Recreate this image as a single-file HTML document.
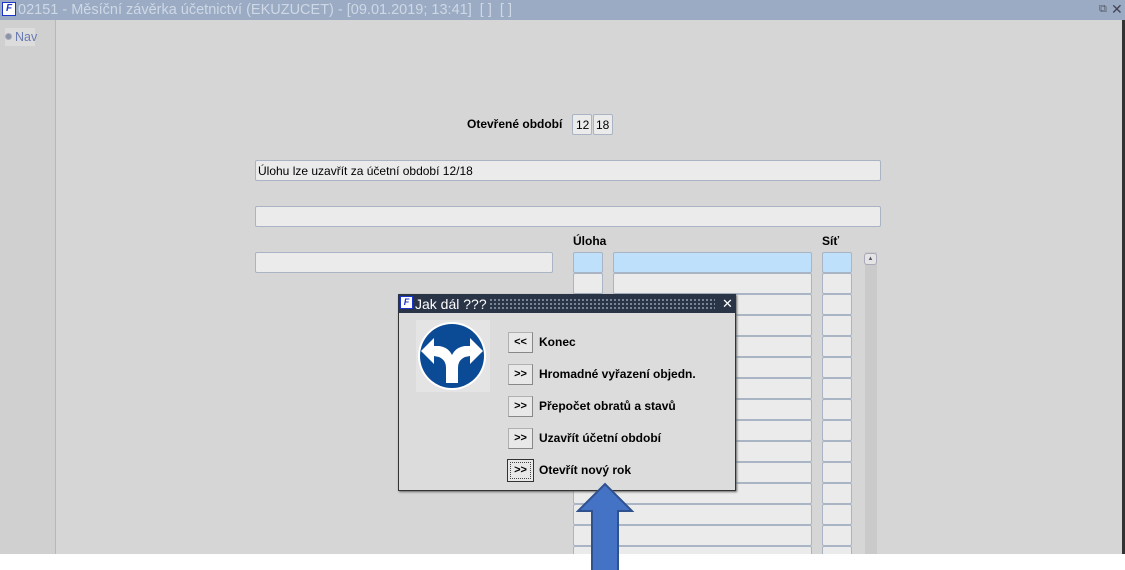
<!DOCTYPE html>
<html><head><meta charset="utf-8"><style>
*{margin:0;padding:0;box-sizing:border-box}
body{width:1125px;height:570px;background:#fff;position:relative;overflow:hidden;font-family:"Liberation Sans",Arial,sans-serif;font-size:12px;color:#000}
.a{position:absolute}
.f{position:absolute;background:#ebebeb;border:1px solid #a9b4c4;border-radius:2px}
.b{background:#bfe0fb}
.lbl{position:absolute;font-weight:bold;font-size:12px}
.btn{position:absolute;left:508px;width:25px;height:21px;background:#e8e8e8;border:1px solid #b0b0b0;border-bottom-color:#888;border-right-color:#888;font-weight:bold;font-size:11px;text-align:center;line-height:19px}
.bt{position:absolute;left:539px;font-weight:bold;font-size:12px}
</style></head><body>
<div class="a" style="left:0;top:0;width:1125px;height:20px;background:#9aabc3"></div>
<div class="a" style="left:2px;top:2px;width:14px;height:14px;background:#fff;border:1px solid #1a35c8;color:#1a35c8;font-size:10px;font-weight:bold;font-style:italic;line-height:12px;text-align:center">F</div>
<div class="a" style="left:18px;top:2px;color:#cfd8e6;font-size:14.5px;line-height:16px">02151 - Měsíční závěrka účetnictví (EKUZUCET) - [09.01.2019; 13:41]&nbsp; [ ]&nbsp; [ ]</div>
<div class="a" style="left:1099px;top:3px;color:#556;font-size:11px">⧉</div>
<div class="a" style="left:1111px;top:1px;color:#445;font-size:14px">✕</div>
<div class="a" style="left:0;top:20px;width:1123px;height:534px;background:#d6d6d6"></div>
<div class="a" style="left:1122px;top:20px;width:3px;height:534px;background:#333"></div>
<div class="a" style="left:0;top:20px;width:56px;height:534px;background:#d0d0d0;border-right:1px solid #b8b8b8"></div>
<div class="a" style="left:5px;top:28px;width:30px;height:18px;background:#dcdcdc"></div>
<div class="a" style="left:5px;top:33px;width:7px;height:7px;border-radius:50%;background:#8a94a8;border:1px solid #aab"></div>
<div class="a" style="left:15px;top:30px;color:#6a7bb0;font-size:12.5px">Nav</div>

<div class="lbl" style="left:467px;top:117px">Otevřené období</div>
<div class="f" style="left:572px;top:114px;width:20px;height:21px;padding:3px 0 0 3px;font-size:12px">12</div>
<div class="f" style="left:593px;top:114px;width:20px;height:21px;padding:3px 0 0 2px;font-size:12px">18</div>
<div class="f" style="left:255px;top:160px;width:626px;height:21px;padding:3px 0 0 2px">Úlohu lze uzavřít za účetní období 12/18</div>
<div class="f" style="left:255px;top:206px;width:626px;height:21px"></div>
<div class="f" style="left:255px;top:252px;width:298px;height:21px"></div>
<div class="lbl" style="left:573px;top:234px">Úloha</div>
<div class="lbl" style="left:822px;top:234px">Síť</div>
<div class="a" style="left:865px;top:252px;width:12px;height:302px;background:#cacaca"></div>
<div class="a" style="left:864px;top:253px;width:13px;height:12px;background:#e4e4e4;border:1px solid #aab;border-radius:3px;font-size:6px;text-align:center;line-height:10px;color:#556">▲</div>
<div class="f b" style="left:573px;top:252px;width:30px;height:21px"></div>
<div class="f b" style="left:613px;top:252px;width:199px;height:21px"></div>
<div class="f b" style="left:822px;top:252px;width:30px;height:21px"></div>
<div class="f" style="left:573px;top:273px;width:30px;height:21px"></div><div class="f" style="left:613px;top:273px;width:199px;height:21px"></div><div class="f" style="left:822px;top:273px;width:30px;height:21px"></div>
<div class="f" style="left:573px;top:294px;width:30px;height:21px"></div><div class="f" style="left:613px;top:294px;width:199px;height:21px"></div><div class="f" style="left:822px;top:294px;width:30px;height:21px"></div>
<div class="f" style="left:573px;top:315px;width:30px;height:21px"></div><div class="f" style="left:613px;top:315px;width:199px;height:21px"></div><div class="f" style="left:822px;top:315px;width:30px;height:21px"></div>
<div class="f" style="left:573px;top:336px;width:30px;height:21px"></div><div class="f" style="left:613px;top:336px;width:199px;height:21px"></div><div class="f" style="left:822px;top:336px;width:30px;height:21px"></div>
<div class="f" style="left:573px;top:357px;width:30px;height:21px"></div><div class="f" style="left:613px;top:357px;width:199px;height:21px"></div><div class="f" style="left:822px;top:357px;width:30px;height:21px"></div>
<div class="f" style="left:573px;top:378px;width:30px;height:21px"></div><div class="f" style="left:613px;top:378px;width:199px;height:21px"></div><div class="f" style="left:822px;top:378px;width:30px;height:21px"></div>
<div class="f" style="left:573px;top:399px;width:30px;height:21px"></div><div class="f" style="left:613px;top:399px;width:199px;height:21px"></div><div class="f" style="left:822px;top:399px;width:30px;height:21px"></div>
<div class="f" style="left:573px;top:420px;width:30px;height:21px"></div><div class="f" style="left:613px;top:420px;width:199px;height:21px"></div><div class="f" style="left:822px;top:420px;width:30px;height:21px"></div>
<div class="f" style="left:573px;top:441px;width:30px;height:21px"></div><div class="f" style="left:613px;top:441px;width:199px;height:21px"></div><div class="f" style="left:822px;top:441px;width:30px;height:21px"></div>
<div class="f" style="left:573px;top:462px;width:30px;height:21px"></div><div class="f" style="left:613px;top:462px;width:199px;height:21px"></div><div class="f" style="left:822px;top:462px;width:30px;height:21px"></div>
<div class="f" style="left:573px;top:483px;width:239px;height:21px"></div><div class="f" style="left:822px;top:483px;width:30px;height:21px"></div>
<div class="f" style="left:573px;top:504px;width:239px;height:21px"></div><div class="f" style="left:822px;top:504px;width:30px;height:21px"></div>
<div class="f" style="left:573px;top:525px;width:239px;height:21px"></div><div class="f" style="left:822px;top:525px;width:30px;height:21px"></div>
<div class="f" style="left:573px;top:546px;width:239px;height:21px"></div><div class="f" style="left:822px;top:546px;width:30px;height:21px"></div>
<div class="a" style="left:0;top:554px;width:1125px;height:16px;background:#fff"></div>

<div class="a" style="left:398px;top:294px;width:338px;height:197px;background:#dcdcdc;border:1px solid #333;border-top:none;box-shadow:1px 1px 2px #666"></div>
<div class="a" style="left:398px;top:294px;width:338px;height:19px;background:#293447"></div>
<div class="a" style="left:489px;top:298px;width:226px;height:11px;background-image:radial-gradient(circle,#8894aa 0.8px,transparent 1.2px);background-size:4px 4px"></div>
<div class="a" style="left:400px;top:296px;width:13px;height:13px;background:#fff;border:1px solid #1a35c8;color:#1a35c8;font-size:9px;font-weight:bold;font-style:italic;line-height:11px;text-align:center">F</div>
<div class="a" style="left:415px;top:296px;color:#fff;font-size:14px;line-height:16px">Jak dál ???</div>
<div class="a" style="left:722px;top:296px;color:#fff;font-size:13px">✕</div>
<div class="a" style="left:416px;top:320px;width:74px;height:72px;background:#e4e4e4"></div>
<svg class="a" style="left:416px;top:320px" width="74" height="72" viewBox="0 0 74 72">
<circle cx="36" cy="36" r="34" fill="#fff"/><circle cx="36" cy="36" r="32" fill="#0b4a94"/>
<path d="M30 63 L30 48 Q30 40 23 37 L18 36 L18 44 L5 31 L18 18 L18 26 L23 26 Q32 27 36 35 Q40 27 49 26 L54 26 L54 18 L67 31 L54 44 L54 36 L49 37 Q42 40 42 48 L42 63 Z" fill="#fff"/>
</svg>
<div class="btn" style="top:332px">&lt;&lt;</div><div class="bt" style="top:335px">Konec</div>
<div class="btn" style="top:364px">&gt;&gt;</div><div class="bt" style="top:367px">Hromadné vyřazení objedn.</div>
<div class="btn" style="top:396px">&gt;&gt;</div><div class="bt" style="top:399px">Přepočet obratů a stavů</div>
<div class="btn" style="top:428px">&gt;&gt;</div><div class="bt" style="top:431px">Uzavřít účetní období</div>
<div class="btn" style="top:459px;left:507px;width:27px;height:23px;border:1px solid #333;outline:1px dotted #444;outline-offset:-4px;line-height:21px">&gt;&gt;</div><div class="bt" style="top:463px">Otevřít nový rok</div>

<svg class="a" style="left:576px;top:482px" width="60" height="88" viewBox="0 0 60 88">
<path d="M16 88 L16 29 L2 29 L29 2 L56 29 L42 29 L42 88" fill="#4472c4" stroke="#2f528f" stroke-width="2"/>
</svg>
</body></html>
